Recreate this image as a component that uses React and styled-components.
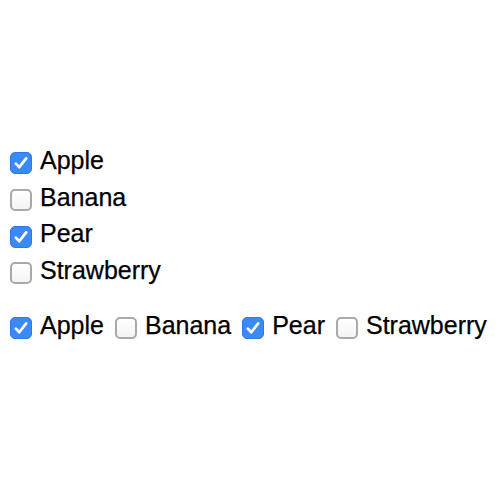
import React, { useState } from 'react';
import styled, { createGlobalStyle } from 'styled-components';

const GlobalStyle = createGlobalStyle`
  body {
    margin: 0;
    background: #ffffff;
    font-family: "Liberation Sans", Arial, sans-serif;
    color: #000000;
  }
`;

const Page = styled.div`
  padding: 142px 0 0 10px;
`;

const List = styled.div`
  display: flex;
  flex-direction: column;
`;

const InlineList = styled.div`
  display: flex;
  margin-top: 18px;
`;

const Label = styled.label`
  display: flex;
  align-items: center;
  gap: 8px;
  height: 36.7px;
  font-size: 25px;
  line-height: 37px;
  margin-right: ${p => (p.$inline ? '11px' : '0')};
  -webkit-text-stroke: 0.25px #000;
  cursor: pointer;
`;

const HiddenInput = styled.input`
  display: none;
`;

const Box = styled.span`
  box-sizing: border-box;
  width: 22px;
  height: 22px;
  margin-top: 6px;
  border-radius: 5px;
  display: flex;
  align-items: center;
  justify-content: center;
  flex-shrink: 0;
  -webkit-text-stroke: 0;
  border: ${p => (p.$checked ? '1px solid #2f78e6' : '2px solid #a9a9a9')};
  background: ${p => (p.$checked ? '#3a8af6' : 'linear-gradient(#ffffff, #f4f4f4)')};
`;

const fruits = ['Apple', 'Banana', 'Pear', 'Strawberry'];

function Check() {
  return (
    <svg width="16" height="16" viewBox="0 0 16 16">
      <path d="M2.8 8.6 L6.3 12.2 L13.2 3.4" fill="none" stroke="#fff" strokeWidth="2.7" strokeLinecap="round" strokeLinejoin="round" />
    </svg>
  );
}

function Fruit({ name, checked, onToggle, inline }) {
  return (
    <Label $inline={inline}>
      <HiddenInput type="checkbox" checked={checked} onChange={onToggle} />
      <Box $checked={checked}>{checked && <Check />}</Box>
      {name}
    </Label>
  );
}

export default function App() {
  const [picked, setPicked] = useState({ Apple: true, Pear: true });
  const toggle = name => setPicked(p => ({ ...p, [name]: !p[name] }));

  return (
    <>
      <GlobalStyle />
      <Page>
        <List>
          {fruits.map(f => (
            <Fruit key={f} name={f} checked={!!picked[f]} onToggle={() => toggle(f)} />
          ))}
        </List>
        <InlineList>
          {fruits.map(f => (
            <Fruit key={f} name={f} inline checked={!!picked[f]} onToggle={() => toggle(f)} />
          ))}
        </InlineList>
      </Page>
    </>
  );
}
